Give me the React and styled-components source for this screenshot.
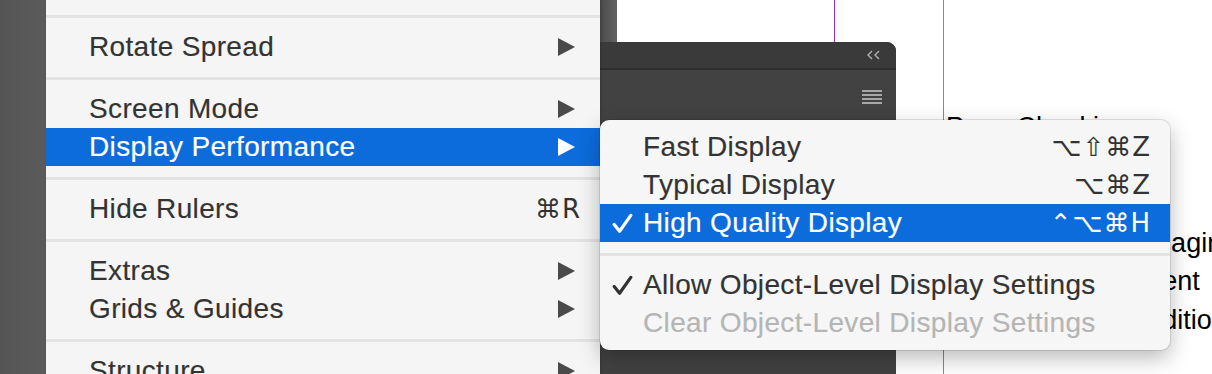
import React from 'react';
import styled, { createGlobalStyle } from 'styled-components';

// グローバル
const GlobalStyle = createGlobalStyle`
  html, body {
    margin: 0;
    padding: 0;
  }
  body {
    background: #595959;
    font-family: "Liberation Sans", "DejaVu Sans", sans-serif;
  }
`;

const symbolFont = `"DejaVu Sans", "Liberation Sans", sans-serif`;

// レイアウト
const Screen = styled.div`
  display: flex;
  width: 1212px;
  height: 374px;
  overflow: hidden;
  background: #595959;
`;

const Pasteboard = styled.div`
  flex: 0 0 46px;
  background: linear-gradient(to right, #555555, #5b5b5b);
`;

const Menu = styled.div`
  position: relative;
  z-index: 2;
  flex: 0 0 554px;
  padding-top: 4px;
  background: #f5f5f5;
  box-shadow: 1px 0 3px rgba(0, 0, 0, 0.18);
`;

const Row = styled.div`
  display: flex;
  align-items: center;
  height: 38px;
  padding: ${(p) => (p.$sub ? '0 20px 0 12px' : '0 25px 0 43px')};
  font-size: 28px;
  color: ${(p) => (p.$active ? '#ffffff' : p.$disabled ? '#b5b5b5' : '#333333')};
  background: ${(p) => (p.$active ? '#0d6cdc' : 'transparent')};
  white-space: nowrap;
`;

const CheckCell = styled.span`
  display: flex;
  align-items: center;
  flex: 0 0 31px;
`;

const Label = styled.span`
  flex: 1;
  letter-spacing: 0.35px;
  -webkit-text-stroke: 0.15px currentColor;
`;

const Shortcut = styled.span`
  margin-right: ${(p) => (p.$sub ? '-1px' : '-6px')};
  font-family: ${symbolFont};
  font-size: 26px;
  letter-spacing: 1px;
`;

const Separator = styled.div`
  display: flex;
  align-items: center;
  height: 24px;

  &::after {
    content: '';
    flex: 1;
    height: 3px;
    background: #e3e3e3;
  }
`;

const Workspace = styled.div`
  position: relative;
  display: flex;
  flex: 1;
`;

const ScrollEdge = styled.div`
  flex: 0 0 17px;
  background: linear-gradient(to right, #4b4b4b, #626262);
`;

const Page = styled.div`
  position: relative;
  flex: 1;
  padding: 108px 0 0 329px;
  background: #ffffff;
  color: #000000;
  font-size: 27px;
  line-height: 38.6px;
  white-space: nowrap;
`;

const Guide = styled.div`
  position: absolute;
  top: 0;
  bottom: 0;
  left: ${(p) => p.$x}px;
  width: 1px;
  background: ${(p) => p.$color};
`;

const Panel = styled.div`
  position: absolute;
  z-index: 1;
  top: 42px;
  left: -120px;
  bottom: 0;
  width: 416px;
  background: #424242;
  border-top-right-radius: 9px;
  overflow: hidden;
`;

const PanelHeader = styled.div`
  display: flex;
  justify-content: flex-end;
  align-items: center;
  height: 26px;
  padding-right: 16px;
  background: #3a3a3a;
  border-bottom: 2px solid #2d2d2d;
`;

const PanelBody = styled.div`
  display: flex;
  justify-content: flex-end;
  padding: 20px 14px 0 0;
`;

const Submenu = styled.div`
  position: absolute;
  z-index: 3;
  top: 120px;
  left: 0;
  width: 570px;
  padding: 8px 0;
  background: #f6f6f6;
  border-radius: 9px;
  box-shadow: 0 0 0 1px rgba(0, 0, 0, 0.1), 0 8px 22px rgba(0, 0, 0, 0.28);
  overflow: hidden;
`;

// アイコン
const Arrow = ({ active }) => (
  <svg width="17" height="18" viewBox="0 0 17 18">
    <polygon points="0,0 17,9 0,18" fill={active ? '#ffffff' : '#4a4a4a'} />
  </svg>
);

const Check = ({ active }) => (
  <svg width="21" height="21" viewBox="0 0 21 21">
    <path
      d="M2.2 11.5 L7.6 18.2 L18.8 2.4"
      fill="none"
      stroke={active ? '#ffffff' : '#333333'}
      strokeWidth="3.2"
      strokeLinecap="round"
      strokeLinejoin="round"
    />
  </svg>
);

const Collapse = () => (
  <svg width="13" height="10" viewBox="0 0 13 10">
    <path d="M5 1 L1 5 L5 9 M12 1 L8 5 L12 9" fill="none" stroke="#b0b0b0" strokeWidth="1.4" />
  </svg>
);

const PanelMenuIcon = () => (
  <svg width="20" height="14" viewBox="0 0 20 14">
    {[0, 4, 8, 12].map((y) => (
      <rect key={y} x="0" y={y} width="20" height="2" fill="#a8a8a8" />
    ))}
  </svg>
);

// データ
const viewMenu = [
  { type: 'sep' },
  { label: 'Rotate Spread', sub: true },
  { type: 'sep' },
  { label: 'Screen Mode', sub: true },
  { label: 'Display Performance', sub: true, active: true },
  { type: 'sep' },
  { label: 'Hide Rulers', key: '⌘R' },
  { type: 'sep' },
  { label: 'Extras', sub: true },
  { label: 'Grids & Guides', sub: true },
  { type: 'sep' },
  { label: 'Structure', sub: true },
];

const displayMenu = [
  { label: 'Fast Display', key: '⌥⇧⌘Z' },
  { label: 'Typical Display', key: '⌥⌘Z' },
  { label: 'High Quality Display', key: '⌃⌥⌘H', checked: true, active: true },
  { type: 'sep' },
  { label: 'Allow Object-Level Display Settings', checked: true },
  { label: 'Clear Object-Level Display Settings', disabled: true },
];

const pageLines = [
  'Page Checking',
  'Before you',
  'hand off a',
  'Preflights and managing',
  'any links and content',
  'photos and the additional',
];

const App = () => (
  <Screen>
    <GlobalStyle />
    <Pasteboard />
    <Menu>
      {viewMenu.map((item, i) =>
        item.type === 'sep' ? (
          <Separator key={i} />
        ) : (
          <Row key={i} $active={item.active}>
            <Label>{item.label}</Label>
            {item.sub && <Arrow active={item.active} />}
            {item.key && <Shortcut>{item.key}</Shortcut>}
          </Row>
        )
      )}
    </Menu>
    <Workspace>
      <ScrollEdge />
      <Page>
        <Guide $x={217} $color="#9a2fc9" />
        <Guide $x={326} $color="#3d9cf0" />
        {pageLines.map((line) => (
          <div key={line}>{line}</div>
        ))}
      </Page>
      <Panel>
        <PanelHeader>
          <Collapse />
        </PanelHeader>
        <PanelBody>
          <PanelMenuIcon />
        </PanelBody>
      </Panel>
      <Submenu>
        {displayMenu.map((item, i) =>
          item.type === 'sep' ? (
            <Separator key={i} />
          ) : (
            <Row key={i} $sub $active={item.active} $disabled={item.disabled}>
              <CheckCell>{item.checked && <Check active={item.active} />}</CheckCell>
              <Label>{item.label}</Label>
              {item.key && <Shortcut $sub>{item.key}</Shortcut>}
            </Row>
          )
        )}
      </Submenu>
    </Workspace>
  </Screen>
);

export default App;
